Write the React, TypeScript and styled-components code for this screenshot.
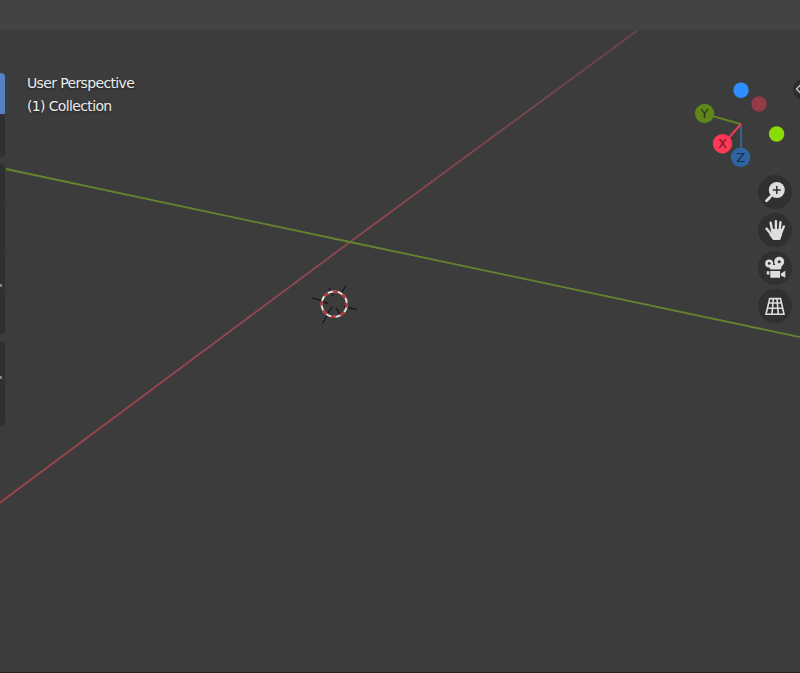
import React from "react";
import styled, { createGlobalStyle } from "styled-components";

const GlobalStyle = createGlobalStyle`
  * { box-sizing: border-box; }
  html, body { margin: 0; padding: 0; overflow: hidden; background: #3c3c3c; }
`;

const Editor = styled.main`
  display: flex;
  flex-direction: column;
  width: 800px;
  height: 673px;
  overflow: hidden;
  background: #3c3c3c;
  border-bottom: 1px solid #232323;
  font-family: "DejaVu Sans", sans-serif;
`;

const Header = styled.header`
  flex: 0 0 30px;
  background: #434343;
`;

const Viewport = styled.section`
  position: relative;
  flex: 1;
  display: flex;
  justify-content: space-between;
  min-height: 0;
`;

const SceneCanvas = styled.svg`
  position: absolute;
  inset: 0;
  width: 100%;
  height: 100%;
`;

const LeftRegion = styled.div`
  position: relative;
  display: flex;
  align-items: flex-start;
`;

const Toolbar = styled.nav`
  display: flex;
  flex-direction: column;
  gap: 7px;
  width: 6px;
  padding-top: 42.5px;
`;

const ToolGroup = styled.div`
  display: flex;
  flex-direction: column;
  gap: 1px;
  width: 5px;
  overflow: hidden;
  border-radius: 0 4px 4px 0;
  background: #363636;
`;

const Tool = styled.div<{ $active?: boolean }>`
  display: flex;
  align-items: flex-end;
  height: 41.75px;
  background: ${(p) => (p.$active ? "#5680c2" : "#303030")};
`;

const SubmenuMark = styled.i`
  width: 2px;
  height: 3px;
  margin-bottom: 4px;
  background: #858585;
`;

const ViewInfo = styled.div`
  padding: 42px 0 0 21px;
  color: #ececec;
  font-size: 14px;
  line-height: 23px;
  letter-spacing: -0.64px;
  white-space: nowrap;
  text-shadow: 0 1px 2px #222;
`;

const InfoLine = styled.div``;

const RightRegion = styled.aside`
  position: relative;
  display: flex;
  flex-direction: column;
  width: 120px;
  padding-top: 40px;
`;

const Gizmo = styled.svg`
  display: block;
  width: 120px;
  height: 105px;
`;

const NavControls = styled.div`
  display: flex;
  flex-direction: column;
  align-items: flex-end;
  gap: 4px;
  padding-right: 8px;
`;

const NavButton = styled.button`
  display: grid;
  place-items: center;
  width: 34px;
  height: 34px;
  padding: 0;
  border: 0;
  border-radius: 50%;
  background: #303030;
`;

const NavIcon = styled.svg`
  width: 24px;
  height: 24px;
  overflow: visible;
`;

const ICON = "#dedede";

const toolGroups = [
  [{ active: true }, {}],
  [{}, {}, { submenu: true }, {}],
  [{ submenu: true }, {}],
] as { active?: boolean; submenu?: boolean }[][];

function Scene() {
  return (
    <SceneCanvas viewBox="0 30 800 642" preserveAspectRatio="none">
      <defs>
        <linearGradient id="xFade" gradientUnits="userSpaceOnUse" x1="0" y1="502" x2="637" y2="30">
          <stop offset="0" stopColor="#a3444d" />
          <stop offset=".6" stopColor="#8e464d" />
          <stop offset="1" stopColor="#69444a" />
        </linearGradient>
      </defs>
      <path d="M-2 504 350 242 638 30" fill="none" stroke="url(#xFade)" strokeWidth="1.8" />
      <path d="M6 169 350 242 802 337.5" fill="none" stroke="#64842f" strokeWidth="1.8" />
      <g fill="none">
        <path
          d="M312.5 298 324 301M344 306.5 356.5 309.5M345.5 286 340.5 295M328 314 322.5 323.5M329 288 333 296M336 308 341 316M323 302 328 303.2M332 307 328 313"
          stroke="#181818"
          strokeWidth="1.3"
        />
        <circle cx="334.3" cy="304.2" r="12.6" stroke="#e9e2dc" strokeWidth="2" />
        <circle
          cx="334.3"
          cy="304.2"
          r="12.6"
          stroke="#bd2f38"
          strokeWidth="2.2"
          pathLength="16"
          strokeDasharray="1 1"
          strokeDashoffset=".3"
        />
      </g>
    </SceneCanvas>
  );
}

function NavigationGizmo() {
  return (
    <Gizmo viewBox="680 70 120 105" fontFamily="DejaVu Sans, sans-serif" fontSize="13" textAnchor="middle">
      <circle cx="741" cy="90.2" r="7.7" fill="#2e8fff" />
      <circle cx="759" cy="104" r="7.7" fill="#943a49" />
      <circle cx="776.6" cy="134" r="7.7" fill="#8adc05" />
      <g fill="none" strokeWidth="2">
        <path d="M741 124V150" stroke="#34618e" />
        <path d="M740.5 124 707 114.5" stroke="#638320" />
        <path d="M741 124 725 142" stroke="#e93c55" />
      </g>
      <circle cx="704.6" cy="113.5" r="9.7" fill="#5e861b" />
      <text x="704.6" y="118.2" fill="#25370b">Y</text>
      <circle cx="722.5" cy="143.7" r="9.7" fill="#ff3855" />
      <text x="722.5" y="148.4" fill="#6c1726">X</text>
      <circle cx="740.6" cy="157.3" r="9.7" fill="#3164a2" />
      <text x="740.6" y="162" fill="#132d48">Z</text>
      <circle cx="804" cy="89" r="11" fill="#2d2d2d" />
      <path d="M801 84.5 796.5 89 801 93.5" fill="none" stroke="#c5c5c5" strokeWidth="1.4" />
    </Gizmo>
  );
}

function ZoomIcon() {
  return (
    <NavIcon viewBox="0 0 24 24">
      <path d="m9.5 14.5-3 3" stroke={ICON} strokeWidth="1.8" />
      <path d="M7 17.2 3.5 20.7" stroke={ICON} strokeWidth="2.8" strokeLinecap="round" />
      <circle cx="13.8" cy="10" r="8" fill={ICON} />
      <path d="M13.8 6v8M9.8 10h8" stroke="#303030" strokeWidth="1.5" />
    </NavIcon>
  );
}

function HandIcon() {
  return (
    <NavIcon viewBox="0 0 24 24" fill="none" stroke={ICON} strokeLinecap="round" strokeLinejoin="round">
      <path d="M9.3 13 7.6 4.8M12.9 12V3.1M16.7 12 17.5 4.2M18.5 14 20.9 8.4M8.5 16.5 3.5 10.6" strokeWidth="2.4" />
      <path d="M9 11.5h9.8l-.3 5-1.8 5h-6.2L7 16.8 9 15.5Z" fill={ICON} strokeWidth="1.2" />
    </NavIcon>
  );
}

function CameraIcon() {
  return (
    <NavIcon viewBox="0 0 24 24" fill={ICON}>
      <circle cx="6.2" cy="7.4" r="4" />
      <circle cx="16.2" cy="5.8" r="5" />
      <path d="M6.5 9h12v2.5q0 2-2 2H8.5q-2 0-2-2Z" />
      <path d="M7.3 15h9.8v6.8H7.3ZM3.7 15.2h2.7v3.3H3.7ZM18 17.5l4.3-2.7v7L18 19.5Z" />
      <circle cx="6.2" cy="7.4" r="1.4" fill="#303030" />
      <circle cx="16.2" cy="5.8" r="1.5" fill="#303030" />
    </NavIcon>
  );
}

function GridIcon() {
  return (
    <NavIcon viewBox="0 0 24 24" fill="none" stroke={ICON} strokeWidth="1.6">
      <path d="M6.7 4.6h10.8L21 20.2H3ZM10.3 4.6 9 20.2M14 4.6 15.3 20.2M5.8 9h12.7M4.6 14.2h15" />
    </NavIcon>
  );
}

export default function App() {
  return (
    <>
      <GlobalStyle />
      <Editor>
        <Header />
        <Viewport>
          <Scene />
          <LeftRegion>
            <Toolbar aria-label="Tools">
              {toolGroups.map((group, groupIndex) => (
                <ToolGroup key={groupIndex}>
                  {group.map((tool, index) => (
                    <Tool key={index} $active={tool.active}>
                      {tool.submenu && <SubmenuMark />}
                    </Tool>
                  ))}
                </ToolGroup>
              ))}
            </Toolbar>
            <ViewInfo>
              <InfoLine>User Perspective</InfoLine>
              <InfoLine>(1) Collection</InfoLine>
            </ViewInfo>
          </LeftRegion>
          <RightRegion>
            <NavigationGizmo />
            <NavControls>
              <NavButton aria-label="Zoom"><ZoomIcon /></NavButton>
              <NavButton aria-label="Move"><HandIcon /></NavButton>
              <NavButton aria-label="Camera view"><CameraIcon /></NavButton>
              <NavButton aria-label="Toggle projection"><GridIcon /></NavButton>
            </NavControls>
          </RightRegion>
        </Viewport>
      </Editor>
    </>
  );
}
